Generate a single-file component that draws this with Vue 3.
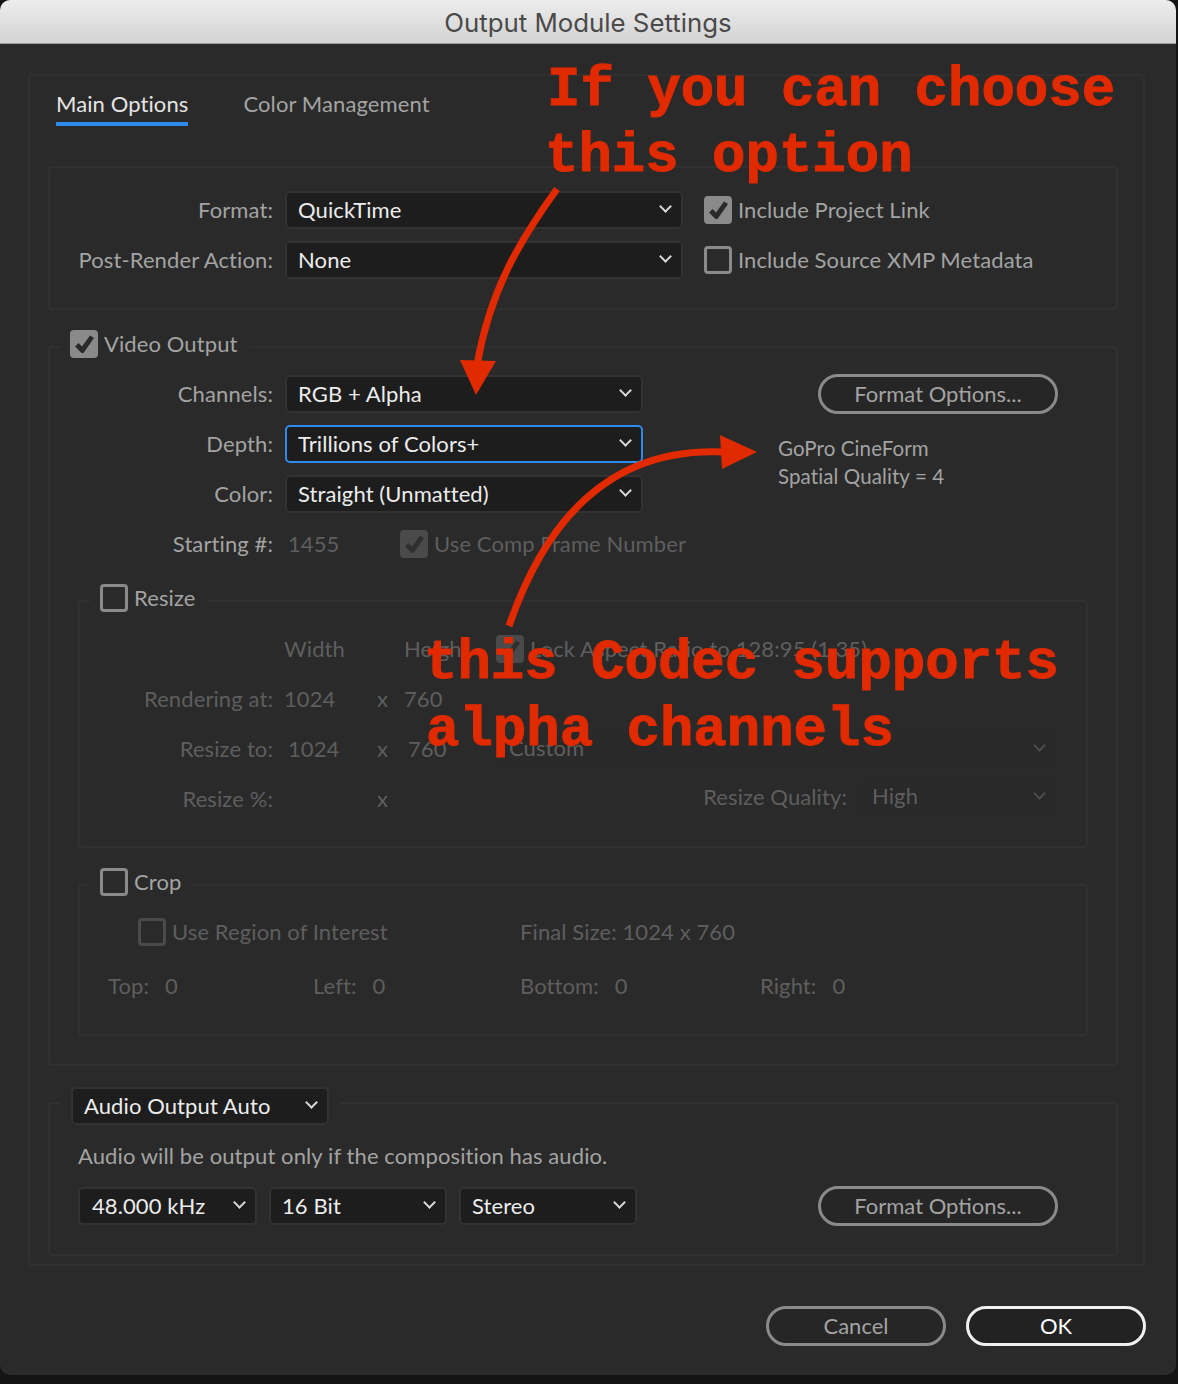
<template>
  <div class="page">
    <div class="window">
      <div class="titlebar">Output Module Settings</div>

      <div class="panel">
        <div class="tabs">
          <span class="tab tab--active">Main Options</span>
          <span class="tab">Color Management</span>
        </div>

        <section class="group format-group">
          <div class="format-grid">
            <label class="lbl">Format:</label>
            <div class="select"><span>QuickTime</span><i class="chev"></i></div>
            <div class="check-row"><span class="cb cb--on"></span><span class="lbl">Include Project Link</span></div>
            <label class="lbl">Post-Render Action:</label>
            <div class="select"><span>None</span><i class="chev"></i></div>
            <div class="check-row"><span class="cb"></span><span class="lbl">Include Source XMP Metadata</span></div>
          </div>
        </section>

        <section class="group video-group">
          <div class="legend check-row">
            <span class="cb cb--on"></span><span class="lbl">Video Output</span>
          </div>

          <div class="video-top">
            <div class="video-fields">
              <div class="field-row" v-for="f in videoFields" :key="f.label">
                <label class="lbl">{{ f.label }}</label>
                <div class="select" :class="{ 'select--focus': f.focus }">
                  <span>{{ f.value }}</span><i class="chev"></i>
                </div>
              </div>
              <div class="field-row">
                <label class="lbl">Starting #:</label>
                <div class="start-row">
                  <span class="dim start-num">1455</span>
                  <div class="check-row"><span class="cb cb--on cb--dim"></span><span class="dim">Use Comp Frame Number</span></div>
                </div>
              </div>
            </div>
            <div class="video-side">
              <button class="pill pill--format">Format Options...</button>
              <p class="codec">GoPro CineForm<br />Spatial Quality = 4</p>
            </div>
          </div>

          <section class="group sub-group resize-group">
            <div class="legend check-row">
              <span class="cb"></span><span class="lbl">Resize</span>
            </div>
            <div class="resize-row">
              <span></span>
              <span class="dim">Width</span>
              <span class="dim">Height</span>
              <div class="check-row"><span class="cb cb--on cb--dim"></span><span class="dim">Lock Aspect Ratio to 128:95 (1.35)</span></div>
            </div>
            <div class="resize-row">
              <span class="dim rlabel">Rendering at:</span>
              <div class="dims"><span class="dim">1024</span><span class="dim">x</span></div>
              <span class="dim">760</span>
              <span></span>
            </div>
            <div class="resize-row">
              <span class="dim rlabel">Resize to:</span>
              <div class="dims dims--inset"><span class="dim">1024</span><span class="dim">x</span></div>
              <span class="dim inset">760</span>
              <div class="select select--dim"><span class="dim">Custom</span><i class="chev"></i></div>
            </div>
            <div class="resize-row">
              <span class="dim rlabel">Resize %:</span>
              <div class="dims"><span></span><span class="dim">x</span></div>
              <span></span>
              <div class="quality">
                <span class="dim">Resize Quality:</span>
                <div class="select select--dim quality-select"><span class="dim">High</span><i class="chev"></i></div>
              </div>
            </div>
          </section>

          <section class="group sub-group crop-group">
            <div class="legend check-row">
              <span class="cb"></span><span class="lbl">Crop</span>
            </div>
            <div class="crop-top">
              <div class="check-row"><span class="cb cb--dim"></span><span class="dim">Use Region of Interest</span></div>
              <span class="dim">Final Size: 1024 x 760</span>
            </div>
            <div class="crop-bottom">
              <div class="crop-cell" v-for="c in cropFields" :key="c"><span class="dim">{{ c }}:</span><span class="dim">0</span></div>
            </div>
          </section>
        </section>

        <section class="group audio-group">
          <div class="audio-legend">
            <div class="select audio-select"><span>Audio Output Auto</span><i class="chev"></i></div>
          </div>
          <p class="lbl audio-note">Audio will be output only if the composition has audio.</p>
          <div class="audio-row">
            <div class="select rate"><span>48.000 kHz</span><i class="chev"></i></div>
            <div class="select bits"><span>16 Bit</span><i class="chev"></i></div>
            <div class="select bits"><span>Stereo</span><i class="chev"></i></div>
            <button class="pill pill--format audio-format">Format Options...</button>
          </div>
        </section>
      </div>

      <div class="actions">
        <button class="pill pill--action">Cancel</button>
        <button class="pill pill--action pill--ok">OK</button>
      </div>

      <!-- red notes drawn on top of the dialog -->
      <svg class="arrows" width="1178" height="1384" viewBox="0 0 1178 1384">
        <path d="M557 189 C 520 240, 490 290, 477 365" fill="none" stroke="#e12a00" stroke-width="7" />
        <polygon points="460,360 496,361 476,395" fill="#e12a00" />
        <path d="M509 626 C 535 550, 590 445, 725 452" fill="none" stroke="#e12a00" stroke-width="7" />
        <polygon points="720,435 722,469 757,452" fill="#e12a00" />
      </svg>
      <div class="note note--a">If you can choose</div>
      <div class="note note--b">this option</div>
      <div class="note note--c">this Codec supports</div>
      <div class="note note--d">alpha channels</div>
    </div>
  </div>
</template>

<script setup>
const videoFields = [
  { label: 'Channels:', value: 'RGB + Alpha' },
  { label: 'Depth:', value: 'Trillions of Colors+', focus: true },
  { label: 'Color:', value: 'Straight (Unmatted)' },
];

const cropFields = ['Top', 'Left', 'Bottom', 'Right'];
</script>

<style>
html,
body {
  margin: 0;
  background: #141414;
}
</style>

<style scoped>
.page {
  width: 1178px;
  height: 1384px;
  overflow: hidden;
  background: #141414;
  font-family: Lato, "Liberation Sans", sans-serif;
  font-size: 22px;
  letter-spacing: 0.1px;
  color: #e8e8e8;
}

.window {
  position: relative;
  width: 1176px;
  height: 1375px;
  box-sizing: border-box;
  background: #2a2a2a;
  border-radius: 10px;
  overflow: hidden;
}

.titlebar {
  height: 43px;
  line-height: 45px;
  text-align: center;
  background: linear-gradient(#ededed, #d3d3d3);
  border-bottom: 1px solid #9c9c9c;
  color: #4a4a4a;
  font-family: Inter, sans-serif;
  font-size: 25.8px;
  letter-spacing: 0;
}

.panel {
  margin: 30px 31px 0 28px;
  height: 1192px;
  box-sizing: border-box;
  border: 2px solid #303030;
  border-radius: 4px;
}

.tabs {
  display: flex;
  gap: 55px;
  height: 48px;
  padding-left: 26px;
  margin-bottom: 42px;
}

.tab {
  height: 46px;
  line-height: 56px;
  color: #a3a3a3;
}

.tab--active {
  color: #e4e4e4;
  border-bottom: 4px solid #2d8ceb;
}

.group {
  border: 2px solid #303030;
  border-radius: 4px;
  box-sizing: border-box;
  margin: 0 25px 0 18px;
}

.format-group {
  height: 144px;
  padding-top: 23px;
}

.format-grid {
  display: grid;
  grid-template-columns: 223px 398px auto;
  grid-auto-rows: 38px;
  column-gap: 12px;
  row-gap: 12px;
  align-items: center;
}

.format-grid .check-row {
  margin-left: 9px;
}

.lbl {
  color: #a3a3a3;
}

.lbl,
.dim {
  padding-bottom: 2px;
}

.format-grid > .lbl,
.field-row > .lbl {
  text-align: right;
}

.dim {
  color: #5e5e5e;
}

.select {
  display: flex;
  align-items: center;
  justify-content: space-between;
  height: 38px;
  box-sizing: border-box;
  padding: 0 10px 2px 11px;
  background: #1d1d1d;
  border: 2px solid #323232;
  border-radius: 5px;
  color: #ececec;
  white-space: nowrap;
}

.select--focus {
  border-color: #2d8ceb;
}

.select--dim {
  padding-right: 12px;
  background: #292929;
  border-color: #2a2a2a;
}

.select--dim .chev {
  border-color: #4d4d4d;
}

.chev {
  width: 9px;
  height: 9px;
  margin: -5px 1px 0 0;
  box-sizing: border-box;
  border-right: 2px solid #d8d8d8;
  border-bottom: 2px solid #d8d8d8;
  transform: rotate(45deg);
}

.check-row {
  display: flex;
  align-items: center;
  gap: 6px;
  white-space: nowrap;
}

.cb {
  position: relative;
  flex: none;
  width: 28px;
  height: 28px;
  box-sizing: border-box;
  border: 3px solid #8a8a8a;
  border-radius: 4px;
}

.cb--on {
  background: #8a8a8a;
}

.cb--on::after {
  content: "";
  position: absolute;
  left: -3px;
  top: -3px;
  width: 28px;
  height: 28px;
  background: #2a2a2a;
  clip-path: polygon(5px 16.5px, 8.5px 13px, 12px 16.5px, 20px 5.5px, 24px 8px, 13.5px 23px, 11.5px 23px);
}

.cb--dim {
  border-color: #4a4a4a;
}

.cb--on.cb--dim {
  background: #4a4a4a;
}

.cb--on.cb--dim::after {
  background: #2f2f2f;
}

.legend {
  width: fit-content;
  height: 28px;
  margin: -18px 0 0 10px;
  padding: 0 12px 0 10px;
  background: #2a2a2a;
}

.video-group {
  height: 720px;
  margin-top: 36px;
}

.video-top {
  display: flex;
  margin-top: 17px;
}

.video-fields {
  display: flex;
  flex-direction: column;
  gap: 12px;
}

.field-row {
  display: grid;
  grid-template-columns: 223px 358px;
  column-gap: 12px;
  align-items: center;
  height: 38px;
}

.start-row {
  display: flex;
  align-items: center;
  padding-left: 3px;
}

.start-num {
  flex: none;
  width: 112px;
}

.video-side {
  margin-left: 135px;
}

.pill {
  display: block;
  width: 240px;
  height: 40px;
  box-sizing: border-box;
  padding: 0 0 2px;
  border: 3px solid #8a8a8a;
  border-radius: 20px;
  background: #262626;
  color: #a3a3a3;
  font: inherit;
}

.pill--format {
  margin: -1px 0 0 40px;
}

.codec {
  margin: 20px 0 0;
  font-size: 20.5px;
  line-height: 28px;
  color: #a3a3a3;
}

.sub-group {
  margin: 0 28px 0 28px;
}

.resize-group {
  height: 248px;
  margin-top: 37px;
}

.resize-row {
  display: grid;
  grid-template-columns: 204px 120px 92px 563px;
  align-items: center;
  height: 38px;
  margin-bottom: 12px;
  white-space: nowrap;
}

.legend + .resize-row {
  margin-top: 18px;
}

.rlabel {
  text-align: right;
  padding-right: 11px;
}

.dims {
  display: grid;
  grid-template-columns: 93px auto;
}

.dims--inset span:first-child {
  padding-left: 4px;
}

.inset {
  padding-left: 4px;
}

.quality {
  display: flex;
  justify-content: flex-end;
  align-items: center;
  gap: 12px;
  margin-top: -4px;
}

.quality-select {
  width: 200px;
}

.crop-group {
  height: 152px;
  margin-top: 36px;
}

.crop-top {
  display: grid;
  grid-template-columns: 382px auto;
  align-items: center;
  height: 38px;
  margin: 17px 0 16px 58px;
}

.crop-bottom {
  display: grid;
  grid-template-columns: 205px 207px 240px auto;
  height: 38px;
  padding-left: 28px;
  align-items: center;
}

.crop-cell {
  display: flex;
  gap: 16px;
}

.audio-group {
  height: 154px;
  margin-top: 36px;
}

.audio-legend {
  width: fit-content;
  margin: -17px 0 0 10px;
  padding: 0 11px;
  background: #2a2a2a;
}

.audio-select {
  width: 258px;
}

.audio-note {
  margin: 17px 0 17px 28px;
  height: 28px;
  line-height: 28px;
  padding-bottom: 0;
}

.audio-row {
  display: flex;
  gap: 12px;
  margin-left: 28px;
}

.rate {
  width: 179px;
  padding-left: 12px;
}

.bits {
  width: 178px;
}

.audio-format {
  margin: -1px 0 0 169px;
}

.actions {
  display: flex;
  justify-content: flex-end;
  gap: 20px;
  margin-top: 40px;
  padding-right: 30px;
}

.pill--action {
  width: 180px;
}

.pill--ok {
  border-color: #f0f0f0;
  color: #fff;
  background: #222;
}

.arrows {
  position: absolute;
  left: 0;
  top: 0;
  pointer-events: none;
}

.note {
  position: absolute;
  font-family: "Liberation Mono", monospace;
  font-weight: 700;
  font-size: 55.7px;
  line-height: 62px;
  letter-spacing: 0;
  color: #e12a00;
  white-space: pre;
  -webkit-text-stroke: 1px #e12a00;
}

.note--a {
  left: 547px;
  top: 60px;
}

.note--b {
  left: 545px;
  top: 126px;
}

.note--c {
  left: 424px;
  top: 633px;
}

.note--d {
  left: 426px;
  top: 700px;
}
</style>
